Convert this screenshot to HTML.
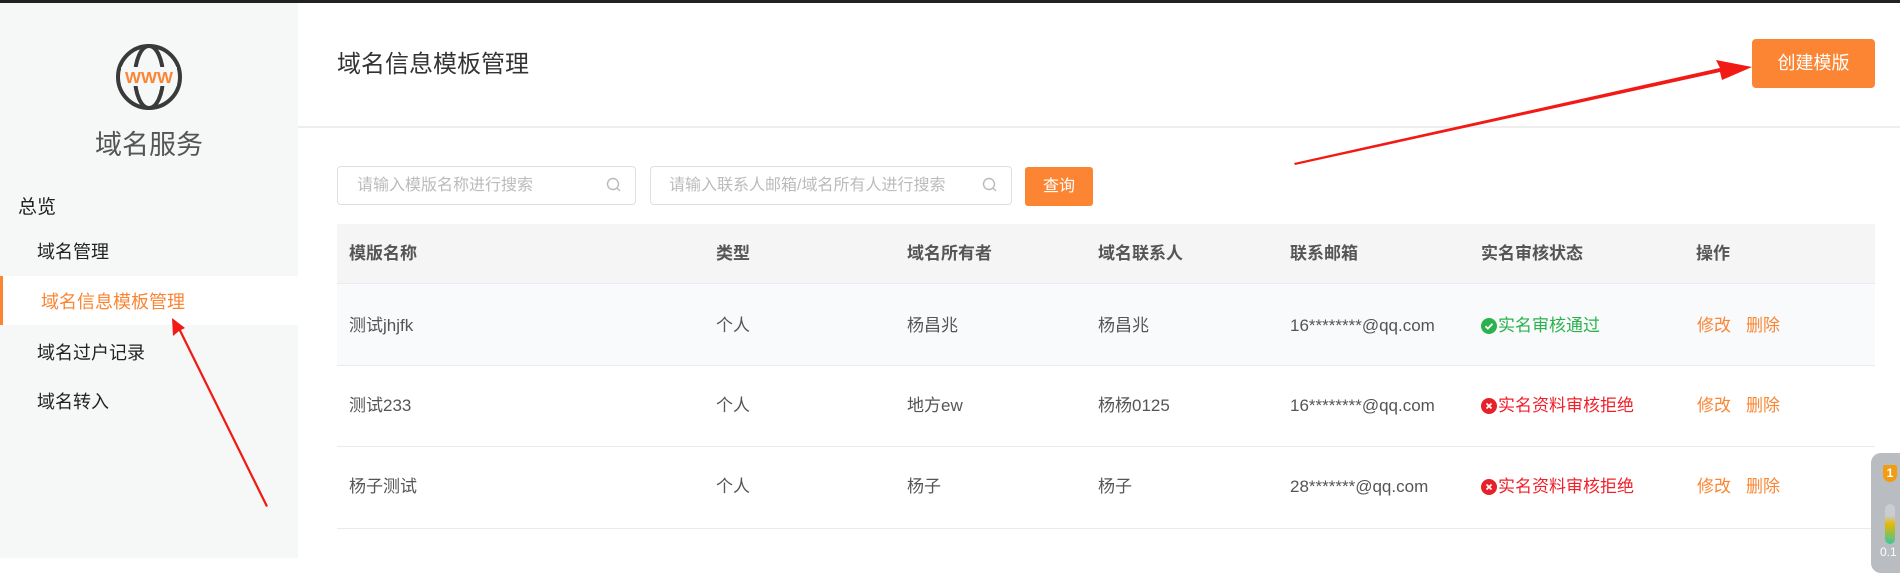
<!DOCTYPE html>
<html><head><meta charset="utf-8"><style>
*{margin:0;padding:0;box-sizing:border-box}
body{width:1900px;height:558px;overflow:hidden;background:#fff;font-family:"Liberation Sans","Noto Sans CJK SC",sans-serif;position:relative;color:#333}
.abs{position:absolute;white-space:nowrap}
#top{left:0;top:0;width:1900px;height:3px;background:#222}
#side{left:0;top:3px;width:298px;height:555px;background:#f6f7f7}
.nav{font-size:18px;color:#222;line-height:24px}
.th{font-size:17px;font-weight:bold;color:#555;line-height:24px}
.td{font-size:17px;color:#555;line-height:24px}
.inp{height:39px;border:1px solid #dcdfe6;border-radius:4px;background:#fff}
.ph{font-size:16px;color:#bbb;line-height:24px}
.or{color:#fb8533}
</style></head><body>
<div class="abs" id="top"></div>
<div class="abs" id="side"></div>
<svg class="abs" style="left:114px;top:42px" width="70" height="70" viewBox="0 0 70 70">
<circle cx="35" cy="35" r="31" fill="none" stroke="#3a3a3a" stroke-width="4"/>
<ellipse cx="35" cy="35" rx="14" ry="31" fill="none" stroke="#3a3a3a" stroke-width="4"/>
<rect x="7" y="25" width="56" height="19" fill="#f6f7f7"/>
<text x="35" y="41" text-anchor="middle" font-family="Liberation Sans Narrow, Liberation Sans" font-weight="bold" font-size="16" textLength="48" lengthAdjust="spacingAndGlyphs" fill="#fb8533">WWW</text>
</svg>
<div class="abs" style="left:0;width:298px;text-align:center;top:129px;font-size:27px;color:#555;line-height:32px">域名服务</div>
<div class="abs nav" style="left:18px;top:196px;font-size:19px">总览</div>
<div class="abs nav" style="left:37px;top:240px">域名管理</div>
<div class="abs" style="left:0;top:276px;width:298px;height:49px;background:#fff;border-left:3px solid #fb8533"></div>
<div class="abs nav or" style="left:41px;top:290px">域名信息模板管理</div>
<div class="abs nav" style="left:37px;top:341px">域名过户记录</div>
<div class="abs nav" style="left:37px;top:390px">域名转入</div>

<div class="abs" style="left:337px;top:50px;font-size:24px;color:#333;line-height:30px">域名信息模板管理</div>
<div class="abs" style="left:298px;top:126px;width:1602px;height:2px;background:#eee"></div>
<div class="abs" style="left:1752px;top:39px;width:123px;height:49px;background:#fb8533;border-radius:4px;color:#fff;font-size:18px;text-align:center;line-height:49px">创建模版</div>

<div class="abs inp" style="left:337px;top:166px;width:299px"></div>
<div class="abs ph" style="left:357px;top:174px">请输入模版名称进行搜索</div>
<div class="abs inp" style="left:650px;top:166px;width:362px"></div>
<div class="abs ph" style="left:669px;top:174px">请输入联系人邮箱/域名所有人进行搜索</div>
<svg class="abs" style="left:606px;top:177px" width="16" height="17"><circle cx="7" cy="7" r="5.5" fill="none" stroke="#bbb" stroke-width="1.4"/><line x1="11" y1="11" x2="14" y2="14" stroke="#bbb" stroke-width="1.4"/></svg>
<svg class="abs" style="left:982px;top:177px" width="16" height="17"><circle cx="7" cy="7" r="5.5" fill="none" stroke="#bbb" stroke-width="1.4"/><line x1="11" y1="11" x2="14" y2="14" stroke="#bbb" stroke-width="1.4"/></svg>
<div class="abs" style="left:1025px;top:167px;width:68px;height:39px;background:#fb8533;border-radius:3px;color:#fff;font-size:16px;text-align:center;line-height:39px">查询</div>

<div class="abs" style="left:337px;top:224px;width:1538px;height:60px;background:#f5f5f5;border-bottom:1px solid #e8ebf0"></div>
<div class="abs" style="left:337px;top:284px;width:1538px;height:82px;background:#f9fafc;border-bottom:1px solid #e8ebf0"></div>
<div class="abs" style="left:337px;top:366px;width:1538px;height:81px;border-bottom:1px solid #e8ebf0"></div>
<div class="abs" style="left:337px;top:447px;width:1538px;height:82px;border-bottom:1px solid #e8ebf0"></div>

<div class="abs th" style="left:349px;top:242px">模版名称</div>
<div class="abs th" style="left:716px;top:242px">类型</div>
<div class="abs th" style="left:907px;top:242px">域名所有者</div>
<div class="abs th" style="left:1098px;top:242px">域名联系人</div>
<div class="abs th" style="left:1290px;top:242px">联系邮箱</div>
<div class="abs th" style="left:1481px;top:242px">实名审核状态</div>
<div class="abs th" style="left:1696px;top:242px">操作</div>

<div class="abs td" style="left:349px;top:314px">测试jhjfk</div>
<div class="abs td" style="left:716px;top:314px">个人</div>
<div class="abs td" style="left:907px;top:314px">杨昌兆</div>
<div class="abs td" style="left:1098px;top:314px">杨昌兆</div>
<div class="abs td" style="left:1290px;top:314px">16********@qq.com</div>
<svg class="abs" style="left:1481px;top:318px" width="16" height="16"><circle cx="8" cy="8" r="8" fill="#2bb24c"/><path d="M4.5 8.2l2.4 2.4 4.6-4.8" fill="none" stroke="#fff" stroke-width="1.8"/></svg>
<div class="abs td" style="left:1498px;top:314px;color:#2bb24c">实名审核通过</div>

<div class="abs td" style="left:349px;top:394px">测试233</div>
<div class="abs td" style="left:716px;top:394px">个人</div>
<div class="abs td" style="left:907px;top:394px">地方ew</div>
<div class="abs td" style="left:1098px;top:394px">杨杨0125</div>
<div class="abs td" style="left:1290px;top:394px">16********@qq.com</div>
<svg class="abs" style="left:1481px;top:398px" width="16" height="16"><circle cx="8" cy="8" r="8" fill="#e8202a"/><path d="M5.5 5.5l5 5M10.5 5.5l-5 5" stroke="#fff" stroke-width="1.8"/></svg>
<div class="abs td" style="left:1498px;top:394px;color:#f0202a">实名资料审核拒绝</div>

<div class="abs td" style="left:349px;top:475px">杨子测试</div>
<div class="abs td" style="left:716px;top:475px">个人</div>
<div class="abs td" style="left:907px;top:475px">杨子</div>
<div class="abs td" style="left:1098px;top:475px">杨子</div>
<div class="abs td" style="left:1290px;top:475px">28*******@qq.com</div>
<svg class="abs" style="left:1481px;top:479px" width="16" height="16"><circle cx="8" cy="8" r="8" fill="#e8202a"/><path d="M5.5 5.5l5 5M10.5 5.5l-5 5" stroke="#fff" stroke-width="1.8"/></svg>
<div class="abs td" style="left:1498px;top:475px;color:#f0202a">实名资料审核拒绝</div>

<div class="abs td or" style="left:1697px;top:314px">修改</div><div class="abs td or" style="left:1746px;top:314px">删除</div>
<div class="abs td or" style="left:1697px;top:394px">修改</div><div class="abs td or" style="left:1746px;top:394px">删除</div>
<div class="abs td or" style="left:1697px;top:475px">修改</div><div class="abs td or" style="left:1746px;top:475px">删除</div>

<div class="abs" style="left:1871px;top:453px;width:40px;height:120px;background:#b9bcc0;border-radius:10px"></div>
<div class="abs" style="left:1883px;top:465px;width:14px;height:17px;background:#f39c12;border-radius:2px 2px 7px 7px;color:#fff;font-size:12px;font-weight:bold;text-align:center;line-height:16px">1</div>
<div class="abs" style="left:1885px;top:504px;width:10px;height:40px;border-radius:5px;background:linear-gradient(#c9ccd0 30%,#e6b800 50%,#3cc6a0)"></div>
<div class="abs" style="left:1880px;top:545px;font-size:12px;color:#fff">0.1</div>

<svg class="abs" style="left:0;top:0" width="1900" height="558">
<polygon points="1294,163 1720,68 1716,60 1752,67 1722,80 1720,72 1295,165" fill="#f21a14"/>
<polygon points="266,507 179,331 173,336 172,318 185,328 181,330 268,506" fill="#f21a14"/>
</svg>
</body></html>
